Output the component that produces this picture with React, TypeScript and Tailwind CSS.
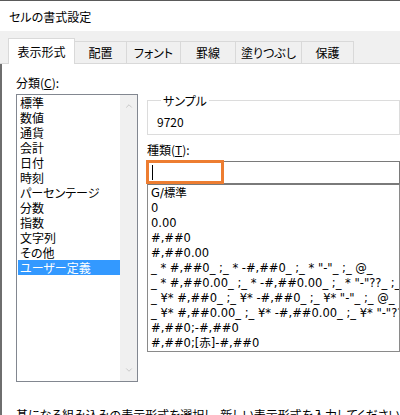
import { ChevronUp, ChevronDown } from 'lucide-react'

const tabs = [
  { label: '表示形式', w: 'w-[67px]', active: true },
  { label: '配置', w: 'w-[52px]' },
  { label: 'フォント', w: 'w-[54px]' },
  { label: '罫線', w: 'w-[55px]' },
  { label: '塗りつぶし', w: 'w-[66px]' },
  { label: '保護', w: 'w-[52px]' },
]

const categories = [
  '標準',
  '数値',
  '通貨',
  '会計',
  '日付',
  '時刻',
  'パーセンテージ',
  '分数',
  '指数',
  '文字列',
  'その他',
  'ユーザー定義',
]

const formats = [
  'G/標準',
  '0',
  '0.00',
  '#,##0',
  '#,##0.00',
  '_ * #,##0_ ;_ * -#,##0_ ;_ * "-"_ ;_ @_',
  '_ * #,##0.00_ ;_ * -#,##0.00_ ;_ * "-"??_ ;_ @_',
  '_ ¥* #,##0_ ;_ ¥* -#,##0_ ;_ ¥* "-"_ ;_ @_',
  '_ ¥* #,##0.00_ ;_ ¥* -#,##0.00_ ;_ ¥* "-"??_ ;_ @_',
  '#,##0;-#,##0',
  '#,##0;[赤]-#,##0',
]

export default function App() {
  return (
    <div className="w-[400px] h-[415px] overflow-hidden flex flex-col bg-white border-t border-[#5a5a5a] text-[12px] leading-[15px] text-black font-['Noto_Sans_CJK_JP',sans-serif] [font-feature-settings:'palt']">
      <div className="h-[30px] flex items-center pl-[9px] shrink-0">セルの書式設定</div>

      <div className="h-[33px] shrink-0 bg-[#f0f0f0] border-b border-[#d9d9d9] flex items-end pl-[8px]">
        {tabs.map((t, i) =>
          t.active ? (
            <div
              key={t.label}
              className={`${t.w} h-[26px] -mb-px relative bg-white border border-b-0 border-[#d9d9d9] flex items-center justify-center pb-[1px]`}
            >
              {t.label}
            </div>
          ) : (
            <div
              key={t.label}
              className={`${t.w} h-[22px] bg-[#f0f0f0] border-t border-r border-[#d9d9d9] flex items-center justify-center ${i === 0 ? 'border-l' : ''}`}
            >
              {t.label}
            </div>
          )
        )}
      </div>

      <div className="flex-1 min-h-0 border-l-2 border-[#6e6e6e] pl-[14px] flex flex-col">
        <div className="flex gap-[9px] shrink-0">
          <div className="w-[122px] shrink-0 flex flex-col">
            <div className="mt-[11px] h-[15px]">
              分類(<span className="underline">C</span>):
            </div>
            <div className="mt-[4px] h-[288px] border border-[#828790] flex">
              <div className="flex-1 flex flex-col">
                {categories.map((c) => (
                  <div
                    key={c}
                    className={`h-[15px] ml-px pl-[2px] whitespace-nowrap ${c === 'ユーザー定義' ? 'bg-[#3399ff] text-white' : ''}`}
                  >
                    {c}
                  </div>
                ))}
              </div>
              <div className="w-[17px] bg-[#f0f0f0] flex flex-col items-center justify-between py-[6px]">
                <ChevronUp size={10} strokeWidth={1.6} className="text-[#b4b4b4]" />
                <ChevronDown size={10} strokeWidth={1.6} className="text-[#b4b4b4]" />
              </div>
            </div>
          </div>

          <div className="flex-1 min-w-0 flex flex-col mt-[29px]">
            <fieldset className="border border-[#dcdcdc] pl-[9px] pb-[5px] pt-[6px]">
              <legend className="ml-[4px] px-[2px] leading-[15px]">サンプル</legend>
              <div className="h-[15px]">9720</div>
            </fieldset>

            <div className="mt-[7px] h-[15px]">
              種類(<span className="underline">T</span>):
            </div>

            <div className="relative mt-[4px] h-[23px] border border-[#7a7a7a] flex items-center pl-[4px]">
              <div className="w-px h-[15px] bg-black" />
              <div className="absolute -left-[2px] -top-[2px] w-[78px] h-[24px] border-[3px] border-[#ed7d31]" />
            </div>

            <div className="h-[168px] border border-[#8a8a8a] border-t-[#7a7a7a] pt-[1px] pl-[3px] overflow-hidden font-['DejaVu_Sans','Noto_Sans_CJK_JP',sans-serif] text-[11.5px]">
              {formats.map((f) => (
                <div key={f} className="h-[15px] whitespace-pre">
                  {f}
                </div>
              ))}
            </div>
          </div>
        </div>

        <div className="mt-[25px] whitespace-nowrap">
          基になる組み込みの表示形式を選択し、新しい表示形式を入力してください。
        </div>
      </div>
    </div>
  )
}
